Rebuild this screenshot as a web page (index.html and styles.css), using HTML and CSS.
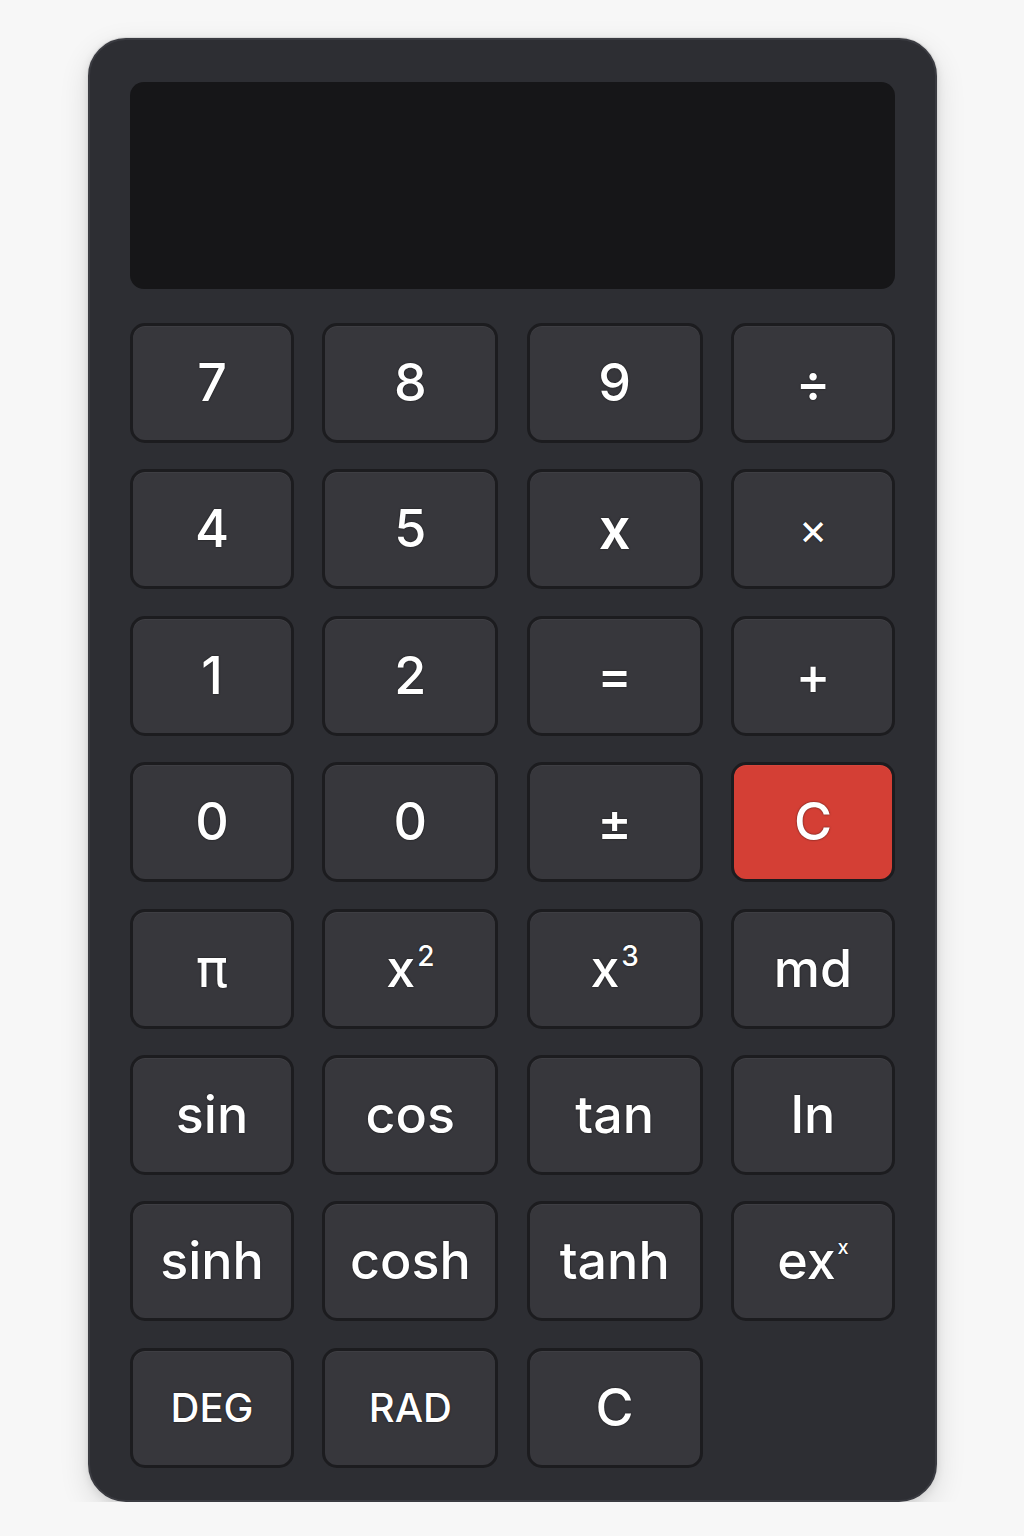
FILE: index.html
```html
<!DOCTYPE html>
<html lang="en">
<head>
<meta charset="utf-8">
<title>Calculator</title>
<link rel="stylesheet" href="styles.css">
</head>
<body>
<div class="calc">
  <div class="display"></div>
  <div class="keys">
    <button class="key">7</button>
    <button class="key">8</button>
    <button class="key">9</button>
    <button class="key">÷</button>

    <button class="key">4</button>
    <button class="key">5</button>
    <button class="key key-x">x</button>
    <button class="key key-small">×</button>

    <button class="key">1</button>
    <button class="key">2</button>
    <button class="key">=</button>
    <button class="key">+</button>

    <button class="key">0</button>
    <button class="key">0</button>
    <button class="key">±</button>
    <button class="key key-red">C</button>

    <button class="key key-pi">π</button>
    <button class="key">x<sup class="sup">2</sup></button>
    <button class="key">x<sup class="sup">3</sup></button>
    <button class="key">md</button>

    <button class="key">sin</button>
    <button class="key">cos</button>
    <button class="key">tan</button>
    <button class="key">ln</button>

    <button class="key">sinh</button>
    <button class="key">cosh</button>
    <button class="key">tanh</button>
    <button class="key">ex<sup class="sup sup-small">x</sup></button>

    <button class="key key-text">DEG</button>
    <button class="key key-text">RAD</button>
    <button class="key">C</button>
  </div>
</div>
</body>
</html>
```

FILE: styles.css
```css
* { box-sizing: border-box; }

html, body {
  margin: 0;
  padding: 0;
  background: #f7f7f7;
}

body {
  font-family: Inter, "Noto Sans", "Liberation Sans", sans-serif;
  padding: 38px 0 0 88px;
}

.calc {
  width: 849px;
  height: 1464px;
  background: #2d2e33;
  border-radius: 38px;
  border: 2px solid #3a3b41;
  box-shadow: 0 0 0 1px #d8d8d8, 0 10px 30px rgba(0,0,0,0.12), 0 2px 8px rgba(0,0,0,0.10);
  padding: 42px 40px 0 40px;
  display: flex;
  flex-direction: column;
  gap: 34px;
}

.display {
  height: 207px;
  background: #161618;
  border-radius: 14px;
}

.keys {
  display: grid;
  grid-template-columns: 164px 176px 176px 164px;
  justify-content: space-between;
  grid-auto-rows: 120px;
  row-gap: 26.4px;
}

.key {
  background: #37373c;
  border: 3px solid #1c1c1f;
  border-radius: 15px;
  color: #ffffff;
  font-family: Inter, "Noto Sans", "Liberation Sans", sans-serif;
  font-weight: 500;
  font-size: 52px;
  line-height: 1;
  padding: 0;
  display: flex;
  align-items: center;
  justify-content: center;
  text-shadow: 0 0 2px rgba(0,0,0,0.7);
  box-shadow: inset 0 1px 0 rgba(255,255,255,0.04);
}

.key-x { font-size: 56px; font-weight: 600; }

.key-small { font-size: 44px; font-weight: 400; }

.key-text { font-size: 40px; }

.key-pi {
  font-family: "DejaVu Sans", "Noto Sans", sans-serif;
  font-size: 54px;
  font-weight: 400;
}

.key-red {
  background: #d43f35;
  border-color: #1c1c1f;
}

.sup {
  font-size: 28px;
  line-height: 1;
  align-self: flex-start;
  margin-top: 30px;
  margin-left: 2px;
}

.sup-small {
  font-size: 20px;
  margin-top: 33px;
}
```
